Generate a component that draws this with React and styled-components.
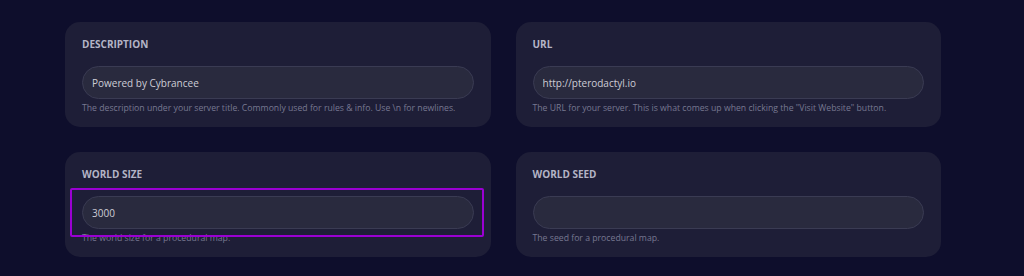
import React from 'react';
import styled, { createGlobalStyle } from 'styled-components';

const GlobalStyle = createGlobalStyle`
  html, body {
    margin: 0;
    padding: 0;
    background: #0e0e2c;
  }
  body {
    font-family: "Open Sans", "Liberation Sans", sans-serif;
  }
`;

const Page = styled.div`
  width: 1024px;
  height: 276px;
  box-sizing: border-box;
  padding: 22px 0 0 65px;
  overflow: hidden;
`;

const Grid = styled.div`
  width: 876px;
  display: grid;
  grid-template-columns: minmax(0, 1fr) minmax(0, 1fr);
  gap: 25px;
`;

const Card = styled.div`
  background: #1e1e37;
  border-radius: 15px;
  padding: 14px 17px 13px;
  height: 105px;
  box-sizing: border-box;
`;

const Label = styled.div`
  font-size: 10px;
  line-height: 16px;
  font-weight: 700;
  color: #b4b4c6;
  text-transform: uppercase;
  margin-bottom: 14px;
`;

const Field = styled.div`
  position: relative;
`;

const Input = styled.input`
  display: block;
  width: 100%;
  height: 33px;
  box-sizing: border-box;
  border-radius: 17px;
  border: 1px solid #3a3b53;
  background: #292a3e;
  color: #cdcdd6;
  font-family: inherit;
  font-size: 10px;
  padding: 0 9px;
  outline: none;
`;

const Help = styled.p`
  margin: 2px 0 0;
  font-size: 8.7px;
  line-height: 14px;
  color: #777891;
  white-space: nowrap;
`;

const Highlight = styled.div`
  position: absolute;
  top: -8px;
  bottom: -8px;
  left: -12px;
  right: -10px;
  border: 2px solid #9a00d2;
  border-radius: 2px;
  pointer-events: none;
`;

const fields = [
  {
    label: 'Description',
    value: 'Powered by Cybrancee',
    help: 'The description under your server title. Commonly used for rules & info. Use \\n for newlines.',
  },
  {
    label: 'URL',
    value: 'http://pterodactyl.io',
    help: 'The URL for your server. This is what comes up when clicking the "Visit Website" button.',
  },
  {
    label: 'World Size',
    value: '3000',
    help: 'The world size for a procedural map.',
    highlighted: true,
  },
  {
    label: 'World Seed',
    value: '',
    help: 'The seed for a procedural map.',
  },
];

export default function App() {
  return (
    <Page>
      <GlobalStyle />
      <Grid>
        {fields.map(f => (
          <Card key={f.label}>
            <Label>{f.label}</Label>
            <Field>
              <Input defaultValue={f.value} />
              {f.highlighted && <Highlight />}
            </Field>
            <Help>{f.help}</Help>
          </Card>
        ))}
      </Grid>
    </Page>
  );
}
